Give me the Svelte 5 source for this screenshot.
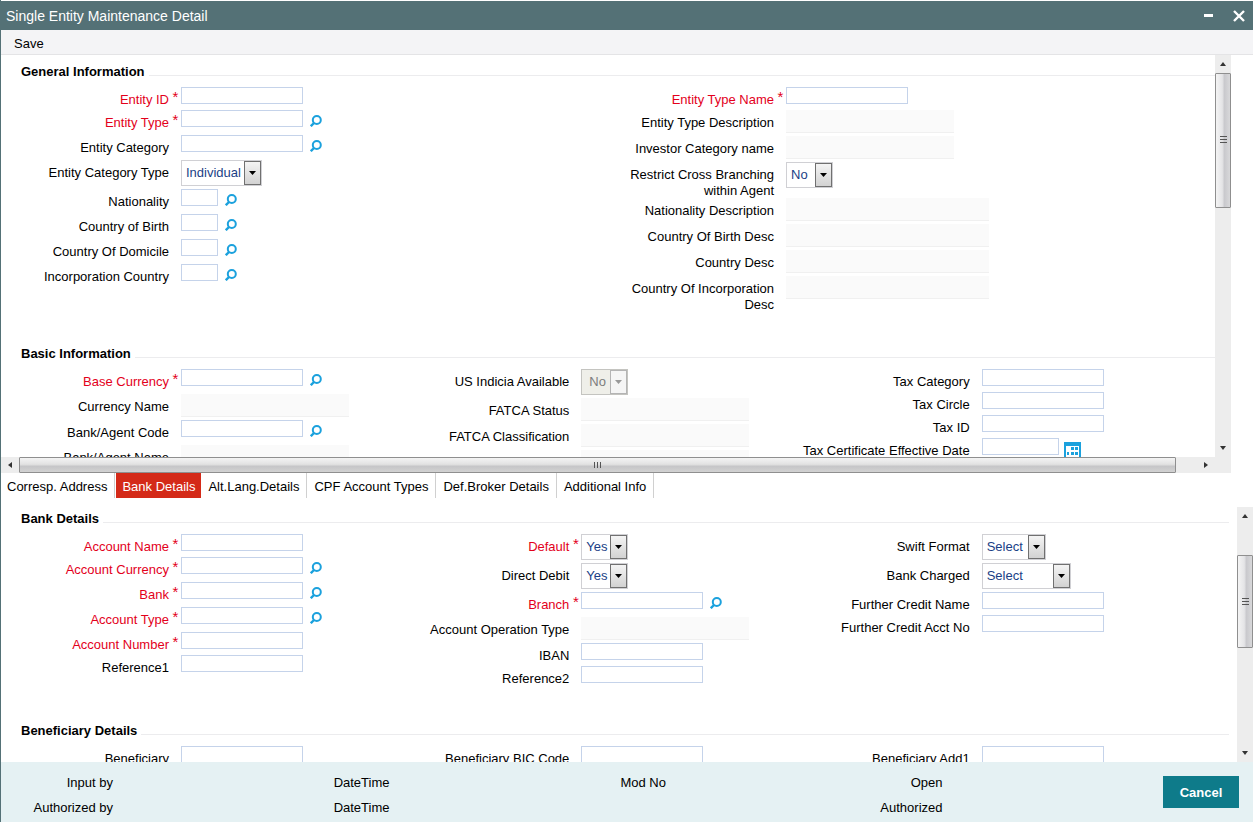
<script lang="ts">
	interface Field {
		label: string;
		kind?: 'text' | 'readonly' | 'select';
		size?: string;
		required?: boolean;
		lookup?: boolean;
		calendar?: boolean;
		disabled?: boolean;
		options?: string[];
	}

	interface Section {
		title: string;
		columns: Field[][];
	}

	const upperSections: Section[] = [
		{
			title: 'General Information',
			columns: [
				[
					{ label: 'Entity ID', required: true },
					{ label: 'Entity Type', required: true, lookup: true },
					{ label: 'Entity Category', lookup: true },
					{ label: 'Entity Category Type', kind: 'select', size: 'lg', options: ['Individual', 'Corporate'] },
					{ label: 'Nationality', size: 'code', lookup: true },
					{ label: 'Country of Birth', size: 'code', lookup: true },
					{ label: 'Country Of Domicile', size: 'code', lookup: true },
					{ label: 'Incorporation Country', size: 'code', lookup: true }
				],
				[
					{ label: 'Entity Type Name', required: true },
					{ label: 'Entity Type Description', kind: 'readonly' },
					{ label: 'Investor Category name', kind: 'readonly' },
					{ label: 'Restrict Cross Branching within Agent', kind: 'select', size: 'sm', options: ['No', 'Yes'] },
					{ label: 'Nationality Description', kind: 'readonly', size: 'wide' },
					{ label: 'Country Of Birth Desc', kind: 'readonly', size: 'wide' },
					{ label: 'Country Desc', kind: 'readonly', size: 'wide' },
					{ label: 'Country Of Incorporation Desc', kind: 'readonly', size: 'wide' }
				]
			]
		},
		{
			title: 'Basic Information',
			columns: [
				[
					{ label: 'Base Currency', required: true, lookup: true },
					{ label: 'Currency Name', kind: 'readonly' },
					{ label: 'Bank/Agent Code', lookup: true },
					{ label: 'Bank/Agent Name', kind: 'readonly' }
				],
				[
					{ label: 'US Indicia Available', kind: 'select', size: 'sm', disabled: true, options: ['No', 'Yes'] },
					{ label: 'FATCA Status', kind: 'readonly' },
					{ label: 'FATCA Classification', kind: 'readonly' },
					{ label: '', kind: 'readonly' }
				],
				[
					{ label: 'Tax Category' },
					{ label: 'Tax Circle' },
					{ label: 'Tax ID' },
					{ label: 'Tax Certificate Effective Date', size: 'date', calendar: true }
				]
			]
		}
	];

	const lowerSections: Section[] = [
		{
			title: 'Bank Details',
			columns: [
				[
					{ label: 'Account Name', required: true },
					{ label: 'Account Currency', required: true, lookup: true },
					{ label: 'Bank', required: true, lookup: true },
					{ label: 'Account Type', required: true, lookup: true },
					{ label: 'Account Number', required: true },
					{ label: 'Reference1' }
				],
				[
					{ label: 'Default', kind: 'select', size: 'sm', required: true, options: ['Yes', 'No'] },
					{ label: 'Direct Debit', kind: 'select', size: 'sm', options: ['Yes', 'No'] },
					{ label: 'Branch', required: true, lookup: true },
					{ label: 'Account Operation Type', kind: 'readonly' },
					{ label: 'IBAN' },
					{ label: 'Reference2' }
				],
				[
					{ label: 'Swift Format', kind: 'select', size: 'md', options: ['Select'] },
					{ label: 'Bank Charged', kind: 'select', size: 'xl', options: ['Select'] },
					{ label: 'Further Credit Name' },
					{ label: 'Further Credit Acct No' }
				]
			]
		},
		{
			title: 'Beneficiary Details',
			columns: [
				[{ label: 'Beneficiary' }],
				[{ label: 'Beneficiary BIC Code' }],
				[{ label: 'Beneficiary Add1' }]
			]
		}
	];

	const tabs = [
		'Corresp. Address',
		'Bank Details',
		'Alt.Lang.Details',
		'CPF Account Types',
		'Def.Broker Details',
		'Additional Info'
	];
	let activeTab = $state('Bank Details');

	const audit = ['Input by', 'DateTime', 'Mod No', 'Open', 'Authorized by', 'DateTime', '', 'Authorized'];

	const fieldId = (section: Section, col: number, row: number) =>
		`${section.title.toLowerCase().replace(/\W+/g, '-')}-${col}-${row}`;
</script>

{#snippet sections(list: Section[])}
	{#each list as section (section.title)}
		<section>
			<h2>{section.title}</h2>
			<div class="columns" class:two={section.columns.length === 2}>
				{#each section.columns as column, c}
					<div class="column">
						{#each column as field, r}
							{@const id = fieldId(section, c, r)}
							{@const kind = field.kind ?? 'text'}
							<div class="field {kind}" class:has-lookup={field.lookup}>
								<label for={id} class:required={field.required}>{field.label}</label>
								<span class="star">{field.required ? '*' : ''}</span>
								{#if kind === 'select'}
									<span class="select {field.size}" class:disabled={field.disabled}>
										<select {id} disabled={field.disabled}>
											{#each field.options ?? [] as option}
												<option>{option}</option>
											{/each}
										</select>
										<span class="arrow">
											<svg width="7" height="4" viewBox="0 0 7 4"><path d="M0 0h7L3.5 4z" fill="currentColor" /></svg>
										</span>
									</span>
								{:else}
									<input {id} type="text" class={field.size ?? ''} readonly={kind === 'readonly'} />
								{/if}
								{#if field.lookup}
									<button type="button" class="lookup" aria-label="Find {field.label}">
										<svg width="12" height="12" viewBox="0 0 12 12" fill="none" stroke="#1ba1dd">
											<circle cx="6.8" cy="5" r="4" stroke-width="2" />
											<path d="M4 8L.8 11.2" stroke-width="2.4" />
										</svg>
									</button>
								{/if}
								{#if field.calendar}
									<button type="button" class="calendar" aria-label="Pick date">
										<svg width="17" height="17" viewBox="0 0 17 17">
											<path d="M0 0h17v17H0z" fill="#1ba1dd" />
											<path d="M2 4h13v11H2z" fill="#fff" />
											<path d="M7 5h3v3H7zM11 5h3v3h-3zM3 10h2v3H3zM7 10h3v3H7zM11 10h3v3h-3z" fill="#1ba1dd" />
										</svg>
									</button>
								{/if}
							</div>
						{/each}
					</div>
				{/each}
			</div>
		</section>
	{/each}
{/snippet}

{#snippet arrow(name: string, d: string)}
	<button type="button" class="step" aria-label={name}>
		<svg width="8" height="8" viewBox="0 0 8 8"><path {d} fill="#333" /></svg>
	</button>
{/snippet}

{#snippet vbar(before: number, thumb: number, after: number)}
	<div class="vbar">
		{@render arrow('Scroll up', 'M1 6h6L4 2z')}
		<div style="flex: {before} 0 0"></div>
		<div class="thumb" style="flex: {thumb} 0 0">
			<svg width="7" height="8" viewBox="0 0 7 8"><path d="M0 .5h7M0 3.500h7M0 6.500h7" stroke="#555" /></svg>
		</div>
		<div style="flex: {after} 0 0"></div>
		{@render arrow('Scroll down', 'M1 2h6L4 6z')}
	</div>
{/snippet}

<div class="window">
	<header>
		<h1>Single Entity Maintenance Detail</h1>
		<button type="button" aria-label="Minimize">
			<svg width="9" height="12" viewBox="0 0 9 12"><path d="M0 4h9v3H0z" fill="#fff" /></svg>
		</button>
		<button type="button" aria-label="Close">
			<svg width="12" height="12" viewBox="0 0 12 12"><path d="M1 1l10 10M11 1L1 11" stroke="#fff" stroke-width="2.400" /></svg>
		</button>
	</header>

	<nav class="toolbar">
		<button type="button">Save</button>
	</nav>

	<div class="upper">
		<div class="scroller">
			<div class="content">{@render sections(upperSections)}</div>
			{@render vbar(0, 133, 232)}
		</div>
		<div class="hbar">
			{@render arrow('Scroll left', 'M6 1v6L2 4z')}
			<div class="thumb">
				<svg width="8" height="6" viewBox="0 0 8 6"><path d="M.5 0v6M3.500 0v6M6.500 0v6" stroke="#555" /></svg>
			</div>
			<div class="rest"></div>
			{@render arrow('Scroll right', 'M2 1v6l4-3z')}
		</div>
	</div>

	<div class="tabs" role="tablist">
		{#each tabs as tab}
			<button
				type="button"
				role="tab"
				class:active={tab === activeTab}
				aria-selected={tab === activeTab}
				onclick={() => (activeTab = tab)}>{tab}</button>
		{/each}
	</div>

	<div class="lower">
		<div class="content">{@render sections(lowerSections)}</div>
		{@render vbar(31, 92, 98)}
	</div>

	<footer>
		<div class="audit">
			{#each audit as item}
				<span>{item}</span>
			{/each}
		</div>
		<button type="button" class="cancel">Cancel</button>
	</footer>
</div>

<style>
	:global(body) {
		background: #fff;
	}

	.window {
		display: flex;
		flex-direction: column;
		height: 100vh;
		box-sizing: border-box;
		padding-top: 1px;
		border-left: 1px solid #547176;
		font: 13px/16px 'Liberation Sans', Arial, sans-serif;
		color: #000;
	}

	button,
	input,
	select {
		font: inherit;
		color: inherit;
		margin: 0;
		padding: 0;
		border: 0;
		background: none;
		box-sizing: border-box;
		border-radius: 0;
	}

	svg {
		display: block;
	}

	header {
		display: flex;
		align-items: center;
		flex: none;
		height: 29px;
		gap: 20px;
		padding: 0 8px 0 5px;
		background: #547176;
	}

	h1 {
		flex: 1;
		margin: 0;
		font-size: 14px;
		font-weight: normal;
		color: #fff;
	}

	.toolbar {
		flex: none;
		height: 24px;
		background: #f4f4f6;
		border-bottom: 1px solid #e4e4e6;
	}

	.toolbar button {
		height: 24px;
		padding: 3px 6px 0;
		margin-left: 7px;
	}

	.upper {
		display: flex;
		flex-direction: column;
		flex: 418 0 0;
		min-height: 0;
		margin-right: 22px;
	}

	.scroller {
		display: flex;
		flex: 1;
		min-height: 0;
	}

	.content {
		flex: 1;
		min-width: 0;
		overflow: hidden;
	}

	section {
		padding-bottom: 25px;
	}

	h2 {
		display: flex;
		height: 32px;
		margin: 0 0 0 20px;
		font-size: 13px;
		line-height: 34px;
		white-space: nowrap;
	}

	h2::after {
		content: '';
		flex: 1;
		height: 1px;
		margin: 20px 0 0 4px;
		background: #ececee;
	}

	.columns {
		display: grid;
		grid-template-columns: 1fr 1fr 1fr;
		padding-right: 13px;
	}

	.columns.two {
		grid-template-columns: 1fr 1fr;
		padding-right: 4px;
	}

	.field {
		display: flex;
		align-items: flex-start;
		min-height: 23px;
	}

	.field.has-lookup {
		min-height: 25px;
	}

	.field.readonly {
		min-height: 26px;
	}

	.field.select {
		min-height: 29px;
	}

	label {
		width: 168px;
		padding-top: 5px;
		margin-bottom: -1px;
		text-align: right;
	}

	.required,
	.star {
		color: #e3001b;
	}

	.star {
		width: 12px;
		box-sizing: border-box;
		padding: 2px 0 0 1px;
		text-align: center;
		font-size: 15px;
	}

	input {
		width: 122px;
		height: 17px;
		border: 1px solid #c5d3ea;
		background: #fff;
	}

	input.code {
		width: 37px;
	}

	input.date {
		width: 77px;
	}

	.readonly input {
		width: 168px;
		height: 23px;
		border: 0;
		border-bottom: 1px solid #f0f0f0;
		background: #fafafa;
	}

	.readonly input.wide {
		width: 203px;
	}

	.field > .select {
		position: relative;
		height: 26px;
		box-sizing: border-box;
		border: 1px solid #d0d0d4;
		color: #1b3f86;
	}

	.select.sm {
		width: 47px;
	}

	.select.md {
		width: 64px;
	}

	.select.lg {
		width: 81px;
	}

	.select.xl {
		width: 89px;
	}

	select {
		appearance: none;
		width: 100%;
		height: 24px;
		padding-left: 4px;
	}

	.arrow {
		position: absolute;
		top: 0;
		right: 0;
		bottom: 0;
		display: flex;
		align-items: center;
		justify-content: center;
		width: 17px;
		box-sizing: border-box;
		border: 1px solid #707070;
		background: linear-gradient(#f4f4f4, #d2d2d2);
		color: #000;
		pointer-events: none;
	}

	.field > .disabled {
		background: #efefe9;
		border-color: #c4c4c0;
		color: #7d7d7d;
	}

	.disabled select {
		padding-left: 7px;
		opacity: 1;
	}

	.disabled .arrow {
		border-color: #b4b4b4;
		background: #f5f5f5;
		color: #999;
	}

	.lookup {
		margin: 5px 0 0 7px;
	}

	.calendar {
		margin: 4px 0 0 5px;
	}

	.vbar {
		display: flex;
		flex-direction: column;
		width: 16px;
		background: #ededed;
	}

	.hbar {
		display: flex;
		flex: none;
		height: 16px;
		padding-right: 16px;
		background: #ededed;
	}

	.step {
		display: flex;
		align-items: center;
		justify-content: center;
		flex: none;
		width: 16px;
		height: 18px;
	}

	.hbar .step {
		width: 18px;
		height: 16px;
	}

	.thumb {
		display: flex;
		align-items: center;
		justify-content: center;
		box-sizing: border-box;
		border: 1px solid #8f8f8f;
		border-radius: 1px;
	}

	.vbar .thumb {
		background: linear-gradient(90deg, #f4f4f4, #e4e4e6 45%, #c9c9cd 60%, #d8d8da);
	}

	.hbar .thumb {
		flex: 1157;
		background: linear-gradient(#f4f4f4, #e2e2e2 45%, #c6c6c8 60%, #d2d2d2);
	}

	.rest {
		flex: 21;
	}

	.tabs {
		display: flex;
		flex: none;
		height: 25px;
		margin-bottom: 4px;
	}

	.tabs button {
		padding: 2px 7px 0;
		border-right: 1px solid #d0d0d0;
		white-space: nowrap;
	}

	.tabs button:first-child {
		padding-left: 6px;
	}

	.tabs button.active {
		margin-left: 1px;
		padding: 2px 6px 0;
		border-right: 0;
		background: #d42a18;
		color: #fff;
	}

	.lower {
		display: flex;
		flex: 260 0 0;
		min-height: 0;
	}

	.lower .columns {
		padding-right: 35px;
	}

	.lower h2 {
		margin-right: 8px;
	}

	.lower .vbar {
		margin-top: 5px;
	}

	footer {
		display: flex;
		align-items: flex-start;
		flex: none;
		height: 60px;
		box-sizing: border-box;
		padding: 8px 14px 0 0;
		background: #e5f1f3;
	}

	.audit {
		display: grid;
		grid-template-columns: repeat(4, 1fr);
		flex: 1;
		margin-right: 56px;
		line-height: 25px;
	}

	.audit span {
		width: 112px;
		text-align: right;
	}

	.cancel {
		width: 76px;
		height: 32px;
		margin-top: 6px;
		padding-top: 1px;
		background: #0e7b8a;
		color: #fff;
		font-weight: bold;
	}
</style>
